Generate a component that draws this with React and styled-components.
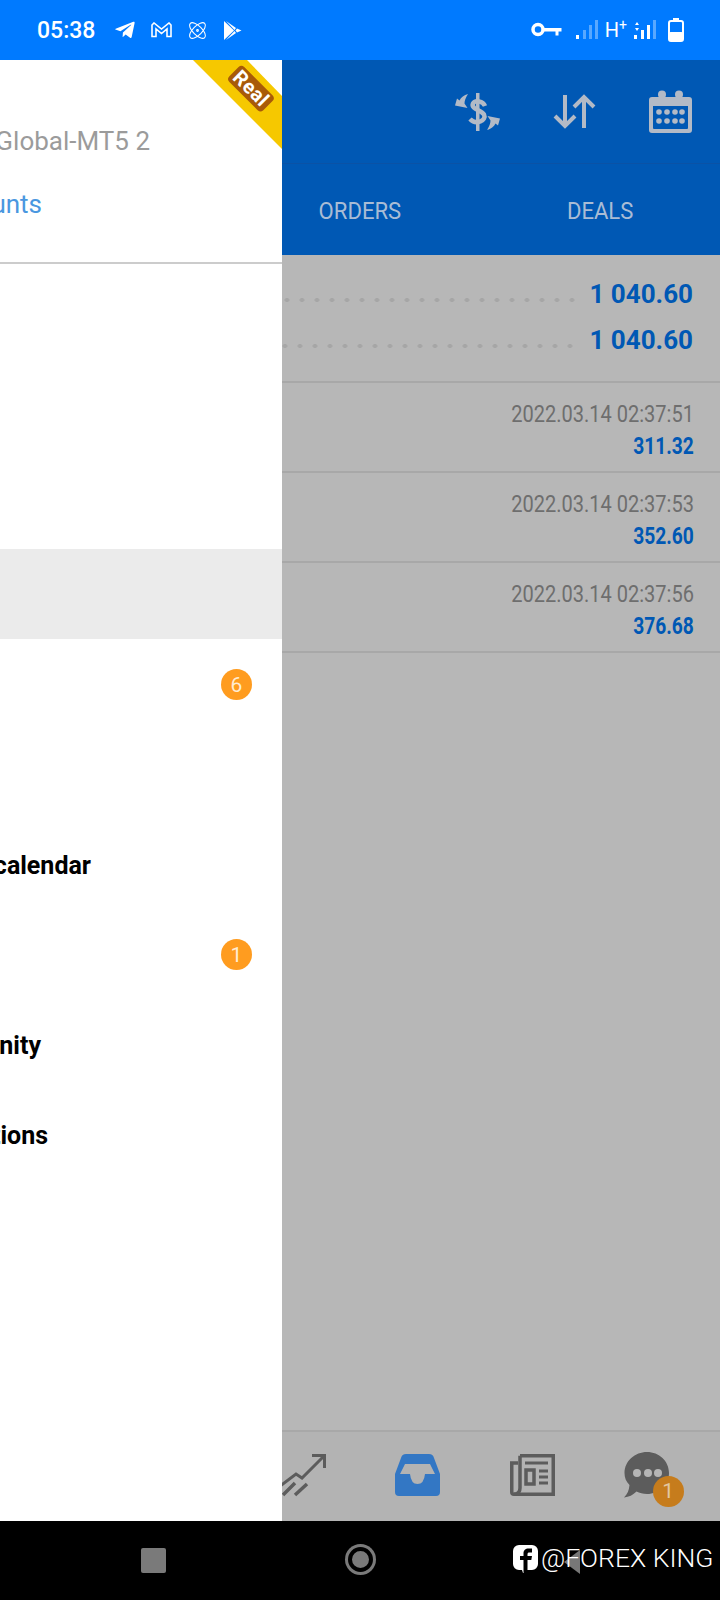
import React from "react";
import styled, { createGlobalStyle } from "styled-components";
import { FaTelegramPlane } from "react-icons/fa";
import { Atom } from "lucide-react";

const GlobalStyle = createGlobalStyle`
  html, body {
    margin: 0;
    padding: 0;
    background: #000;
    font-family: Roboto, "Liberation Sans", sans-serif;
  }
`;

const DEALS = [
  { time: "2022.03.14 02:37:51", value: "311.32" },
  { time: "2022.03.14 02:37:53", value: "352.60" },
  { time: "2022.03.14 02:37:56", value: "376.68" },
];

const MENU = [
  {},
  {},
  {},
  { active: true },
  { badge: 6 },
  {},
  { label: "Economic calendar", end: 191 },
  { badge: 1 },
  { label: "Traders Community", end: 241 },
  { label: "Notifications", end: 234 },
];

const KeyIcon = () => (
  <svg width="31" height="16" viewBox="0 0 31 16">
    <circle cx="7" cy="7.500" r="5" fill="none" stroke="#fff" strokeWidth="3.500" />
    <path d="M12 6h18.500v3.500h-3v4h-3v-4H12z" fill="#fff" />
  </svg>
);

const SignalIcon = ({ lit, arrows }) => (
  <svg width="23" height="20" viewBox="0 0 23 20">
    {arrows && <path d="M2 5l2-3 2 3zM2 8l2 3 2-3z" fill="#fff" />}
    {[
      [1, 15, 4],
      [8, 10, 9],
      [14, 5, 14],
      [20, 0, 19],
    ].map(([x, y, h], i) => (
      <rect
        key={x}
        x={x}
        y={y}
        width="3"
        height={h}
        fill={i < lit ? "#fff" : "#59a8ff"}
      />
    ))}
  </svg>
);

const BatteryIcon = () => (
  <svg width="16" height="24" viewBox="0 0 16 24">
    <path d="M5 0h6v2.500H5z" fill="#fff" />
    <rect x="1" y="3" width="14" height="20" rx="2" fill="none" stroke="#fff" strokeWidth="2" />
    <rect x="1" y="14" width="14" height="9" rx="1.500" fill="#fff" />
  </svg>
);

const MailIcon = () => (
  <svg width="21" height="16" viewBox="0 0 21 16">
    <path
      d="M1 14.500V3l2-2 7.500 6L18 1l2 2v11.500h-4V7l-5.500 4.500L5 7v7.500z"
      fill="none"
      stroke="#fff"
      strokeWidth="1.600"
    />
  </svg>
);

const PlayIcon = () => (
  <svg width="19" height="19" viewBox="0 0 19 19">
    <path d="M1 0l10 9.500L1 19zM3 0l10 7-1.500 2zM3 19l10-7-1.500-2zM14 7.500l4.500 2-4.500 2-1.500-2z" fill="#fff" />
  </svg>
);

const ExchangeIcon = () => (
  <svg width="45" height="38" viewBox="0 0 45 38" fill="#b3bac6">
    <rect x="21" y="0" width="3.500" height="38" />
    <path
      d="M30 13C28 8 20 6.500 18 10.500 15.500 16 26 17 29 21.500 32 27.500 21 32.500 15 26"
      fill="none"
      stroke="#b3bac6"
      strokeWidth="4.500"
    />
    <path d="M0 12.500L2 5.500 4.500 7.500C6 4.500 9 2 13 1 10.500 5 9.500 8 9.500 10.500L12.500 15Z" />
    <path d="M45 25.500L43 32.500 40.500 30.500C39 33.500 36 36 32 37 34.500 33 35.500 30 35.500 27.500L32.500 23Z" />
  </svg>
);

const SortIcon = () => (
  <svg width="43" height="35" viewBox="0 0 43 35" fill="none" stroke="#b3bac6" strokeWidth="4">
    <path d="M12 1V32M2 22L12 32 22 22" />
    <path d="M31 34V3M21 13L31 3 41 13" />
  </svg>
);

const CalendarIcon = () => (
  <svg width="43" height="43" viewBox="0 0 43 43" fill="#b3bac6">
    <circle cx="13" cy="4.500" r="4" />
    <circle cx="30" cy="4.500" r="4" />
    <path
      fillRule="evenodd"
      d="M3 7h37a3 3 0 013 3v30a3 3 0 01-3 3H3a3 3 0 01-3-3V10a3 3 0 013-3zM4 16v22a1 1 0 001 1h33a1 1 0 001-1V16z"
    />
    {[22, 31].map((cy) =>
      [10, 18, 26, 33].map((cx) => <circle key={cx + "-" + cy} cx={cx} cy={cy} r="2.800" />)
    )}
  </svg>
);

const ChartIcon = () => (
  <svg width="48" height="48" viewBox="0 0 48 48" fill="none" stroke="#5c5c5c" strokeWidth="3">
    <path d="M0 36L17 23l6 4L45 5M33 4.500h12.500V17" />
    <path d="M4 44l12-12M16 44l12-11" strokeWidth="3.500" />
  </svg>
);

const InboxIcon = () => (
  <svg width="45" height="42" viewBox="0 0 45 42">
    <path
      fillRule="evenodd"
      fill="#3377c4"
      d="M11 0H34Q38 0 39 4L45 20V38Q45 42 41 42H4Q0 42 0 38V20L6 4Q7 0 11 0ZM10 10H35L40 20H30Q29 30 22.500 30 16 30 15 20H5Z"
    />
  </svg>
);

const NewsIcon = () => (
  <svg width="45" height="42" viewBox="0 0 45 42" fill="none" stroke="#5c5c5c" strokeWidth="3.500">
    <path d="M10 1.750H43.250V40.250H4Q1.750 40.250 1.750 38V9H8" />
    <path d="M10 1.750V34Q10 40 4 40.250" />
    <path d="M15 9H38" strokeWidth="3" />
    <path d="M16 16H24V30H16Z" strokeWidth="3.500" />
    <path d="M29 17H38M29 23H38M29 29H38" strokeWidth="3" />
  </svg>
);

const ChatIcon = () => (
  <svg width="46" height="46" viewBox="0 0 46 46" fill="#5c5c5c">
    <path d="M23 0C35 0 45 9 45 21S35 42 23 42C19 42 15.500 41 12.500 39.500 9 43 5 45 0 45.500 3.500 42 5 38.500 5.500 33 2 29.500 0.500 25.500 0.500 21 0.500 9 11 0 23 0Z" />
    <circle cx="13" cy="21" r="4" fill="#b5b5b5" />
    <circle cx="24" cy="21" r="4" fill="#b5b5b5" />
    <circle cx="34" cy="21" r="4" fill="#b5b5b5" />
  </svg>
);

const FacebookIcon = () => (
  <svg width="25" height="28" viewBox="0 0 25 28">
    <path d="M6 0h13a6 6 0 016 6v13a6 6 0 01-6 6h-6l-3 3-1-3H6a6 6 0 01-6-6V6a6 6 0 016-6z" fill="#fff" />
    <path d="M10.500 27V15H7v-4h3.500V8.500C10.500 5 12.500 3.500 15.500 3.500H19v4h-2.500C15 7.500 14.500 8 14.500 9.500V11H19l-.7 4h-3.800v12z" fill="#000" />
  </svg>
);

export default function App() {
  return (
    <Screen>
      <GlobalStyle />
      <StatusBar>
        <StatusGroup>
          <Clock>05:38</Clock>
          <FaTelegramPlane size={22} color="#fff" />
          <MailIcon />
          <Atom size={21} color="#fff" strokeWidth={1.2} />
          <PlayIcon />
        </StatusGroup>
        <StatusGroup $right>
          <StatusSlot $after={5}>
            <KeyIcon />
          </StatusSlot>
          <StatusSlot>
            <SignalIcon lit={1} />
          </StatusSlot>
          <NetworkLabel>
            H<sup>+</sup>
          </NetworkLabel>
          <StatusSlot $after={4}>
            <SignalIcon lit={3} arrows />
          </StatusSlot>
          <StatusSlot>
            <BatteryIcon />
          </StatusSlot>
        </StatusGroup>
      </StatusBar>

      <Body>
        <Drawer>
          <Ribbon>
            <RibbonLabel>Real</RibbonLabel>
          </Ribbon>
          <DrawerHeader>
            <ServerName>MetaQuotes-Global-MT5 2</ServerName>
            <ManageLink>Manage accounts</ManageLink>
          </DrawerHeader>
          <Menu>
            {MENU.map((item, index) => (
              <MenuRow key={index} $active={item.active}>
                {item.label && <MenuLabel $end={item.end}>{item.label}</MenuLabel>}
                {item.badge && <CountBadge>{item.badge}</CountBadge>}
              </MenuRow>
            ))}
          </Menu>
        </Drawer>

        <Panel>
          <TopBar>
            <Toolbar>
              <ExchangeIcon />
              <SortIcon />
              <CalendarIcon />
            </Toolbar>
            <Tabs>
              <Tab>
                <Narrow>ORDERS</Narrow>
              </Tab>
              <Tab>
                <Narrow>DEALS</Narrow>
              </Tab>
            </Tabs>
          </TopBar>

          <Summary>
            <SummaryRow>
              <Leader />
              <SummaryValue>1 040.60</SummaryValue>
            </SummaryRow>
            <SummaryRow>
              <Leader $shift />
              <SummaryValue>1 040.60</SummaryValue>
            </SummaryRow>
          </Summary>

          {DEALS.map((deal) => (
            <DealRow key={deal.time}>
              <DealTime>{deal.time}</DealTime>
              <DealValue>{deal.value}</DealValue>
            </DealRow>
          ))}

          <Filler />

          <BottomTabs>
            <BottomTab>
              <ChartIcon />
            </BottomTab>
            <BottomTab>
              <InboxIcon />
            </BottomTab>
            <BottomTab>
              <NewsIcon />
            </BottomTab>
            <BottomTab>
              <ChatWrap>
                <ChatIcon />
                <ChatBadge>1</ChatBadge>
              </ChatWrap>
            </BottomTab>
          </BottomTabs>
        </Panel>
      </Body>

      <NavBar>
        <NavSlot>
          <NavSquare />
        </NavSlot>
        <NavSlot>
          <NavCircle />
        </NavSlot>
        <NavSlot>
          <NavBack />
        </NavSlot>
        <Watermark>
          <FacebookIcon />
          <WatermarkText>@FOREX KING</WatermarkText>
        </Watermark>
      </NavBar>
    </Screen>
  );
}

const Screen = styled.div`
  width: 720px;
  height: 1600px;
  display: flex;
  flex-direction: column;
  overflow: hidden;
`;

const StatusBar = styled.div`
  height: 60px;
  flex: none;
  display: flex;
  align-items: center;
  justify-content: space-between;
  padding: 0 37px;
  background: #007aff;
  color: #fff;
`;

const StatusGroup = styled.div`
  display: flex;
  align-items: center;
  gap: ${({ $right }) => ($right ? "8px" : "15px")};
  margin-right: ${({ $right }) => ($right ? "-1px" : "0")};
`;

const StatusSlot = styled.span`
  display: flex;
  margin-right: ${({ $after }) => $after || 0}px;
`;

const Clock = styled.span`
  font-size: 23px;
  font-weight: 500;
  margin-right: 4px;
`;

const NetworkLabel = styled.span`
  font-size: 20px;
  line-height: 24px;
  margin: 0 -2px 0 -1px;

  sup {
    font-size: 14px;
    line-height: 0;
    vertical-align: 7px;
  }
`;

const Body = styled.div`
  flex: 1;
  min-height: 0;
  display: grid;
  grid-template-columns: 282px 1fr;
`;

const Drawer = styled.aside`
  position: relative;
  display: flex;
  flex-direction: column;
  min-width: 0;
  overflow: hidden;
  background: #fff;
`;

const Ribbon = styled.div`
  position: absolute;
  top: 0;
  right: 0;
  width: 89px;
  height: 89px;
  background: #f6c800;
  clip-path: polygon(0 0, 54px 0, 89px 36px, 89px 89px);
`;

const RibbonLabel = styled.span`
  position: absolute;
  top: 18px;
  left: 34px;
  padding: 0 3px;
  border-radius: 4px;
  background: #a85a08;
  color: #fff;
  font-size: 20px;
  font-weight: 700;
  line-height: 21px;
  letter-spacing: 0.5px;
  transform: rotate(45deg);
`;

const DrawerHeader = styled.header`
  height: 204px;
  flex: none;
  display: flex;
  flex-direction: column;
  box-sizing: border-box;
  border-bottom: 2px solid #cccccc;
  padding-top: 66px;
  font-size: 26px;
  line-height: 30px;
  white-space: nowrap;
`;

const ServerName = styled.div`
  display: flex;
  justify-content: flex-end;
  padding-right: 132px;
  color: #9b9b9b;
`;

const ManageLink = styled.div`
  display: flex;
  justify-content: flex-end;
  margin-top: 33px;
  padding-right: 240px;
  color: #4a97e0;
`;

const Menu = styled.nav`
  padding-top: 15px;
`;

const MenuRow = styled.div`
  height: 90px;
  display: flex;
  align-items: center;
  justify-content: flex-end;
  background: ${({ $active }) => ($active ? "#ebebeb" : "transparent")};
  white-space: nowrap;
`;

const MenuLabel = styled.span`
  margin: 2px ${({ $end }) => $end}px 0 0;
  color: #000;
  font-size: 25px;
  font-weight: 700;
`;

const CountBadge = styled.span`
  width: 31px;
  height: 31px;
  margin-right: 30px;
  padding-top: 1px;
  box-sizing: border-box;
  display: flex;
  align-items: center;
  justify-content: center;
  border-radius: 50%;
  background: #ff9c1f;
  color: #ffecd2;
  font-size: 21px;
`;

const Panel = styled.main`
  min-width: 0;
  display: flex;
  flex-direction: column;
  overflow: hidden;
  background: #b7b7b7;
`;

const TopBar = styled.div`
  flex: none;
  background: #0058b4;
`;

const Toolbar = styled.div`
  height: 104px;
  box-sizing: border-box;
  border-bottom: 1px solid #0a52a6;
  padding-right: 28px;
  display: flex;
  align-items: center;
  justify-content: flex-end;
  gap: 53px;
`;

const Tabs = styled.div`
  height: 91px;
  margin-left: -42px;
  padding-top: 2px;
  box-sizing: border-box;
  display: grid;
  grid-template-columns: 240px 240px;
`;

const Tab = styled.div`
  display: flex;
  align-items: center;
  justify-content: center;
  color: #a9bcd5;
  font-size: 24px;
`;

const Narrow = styled.span`
  transform: scaleX(0.92);
`;

const Summary = styled.section`
  height: 128px;
  flex: none;
  box-sizing: border-box;
  padding-top: 16px;
  border-bottom: 2px solid #a8a8a8;
`;

const SummaryRow = styled.div`
  height: 46px;
  padding-right: 27px;
  display: flex;
  align-items: center;
  gap: 10px;
`;

const Leader = styled.div`
  flex: 1;
  height: 6px;
  margin-top: 11px;
  margin-right: ${({ $shift }) => ($shift ? "2px" : "0")};
  background: radial-gradient(circle, #a6a6a6 2px, transparent 2.500px) right center / 15px 6px repeat-x;
`;

const SummaryValue = styled.span`
  color: #0058b4;
  font-size: 26px;
  font-weight: 700;
  line-height: 30px;
  white-space: nowrap;
`;

const DealRow = styled.div`
  height: 90px;
  flex: none;
  box-sizing: border-box;
  padding: 17px 26px 0 0;
  border-bottom: 2px solid #a8a8a8;
  display: flex;
  flex-direction: column;
  align-items: flex-end;
`;

const DealTime = styled.span`
  color: #6e6e6e;
  font-size: 23px;
  line-height: 30px;
  transform: scaleX(0.87);
  transform-origin: right center;
  white-space: nowrap;
`;

const DealValue = styled.span`
  margin-top: 1px;
  color: #0058b4;
  font-size: 24px;
  font-weight: 700;
  line-height: 30px;
  transform: scaleX(0.8);
  transform-origin: right center;
`;

const Filler = styled.div`
  flex: 1;
`;

const BottomTabs = styled.div`
  height: 91px;
  flex: none;
  box-sizing: border-box;
  border-top: 2px solid #a8a8a8;
  background: #b3b3b3;
  display: grid;
  grid-template-columns: repeat(4, 114.500px);
  overflow: hidden;
`;

const BottomTab = styled.div`
  display: flex;
  align-items: center;
  justify-content: center;
  margin-left: -36px;
  margin-right: 36px;
  padding-bottom: 4px;
`;

const ChatWrap = styled.div`
  position: relative;
  display: flex;
`;

const ChatBadge = styled.span`
  position: absolute;
  right: -14px;
  bottom: -9px;
  width: 31px;
  height: 31px;
  display: flex;
  align-items: center;
  justify-content: center;
  border-radius: 50%;
  background: #c67c1c;
  color: #e3c7a0;
  font-size: 21px;
`;

const NavBar = styled.div`
  height: 79px;
  flex: none;
  position: relative;
  box-sizing: border-box;
  padding: 0 48px 0;
  background: #000;
  display: grid;
  grid-template-columns: repeat(3, 1fr);
`;

const NavSlot = styled.div`
  display: flex;
  align-items: center;
  justify-content: center;
`;

const NavSquare = styled.div`
  width: 25px;
  height: 25px;
  margin-left: 2px;
  border-radius: 2px;
  background: #7a7a7a;
`;

const NavCircle = styled.div`
  width: 17px;
  height: 17px;
  border-radius: 50%;
  background: #7a7a7a;
  border: 4px solid #000;
  box-shadow: 0 0 0 3px #7a7a7a;
  margin-top: -2px;
`;

const NavBack = styled.div`
  width: 0;
  height: 0;
  margin-left: 8px;
  margin-top: 2px;
  border-top: 12px solid transparent;
  border-bottom: 12px solid transparent;
  border-right: 16px solid #777;
`;

const Watermark = styled.div`
  position: absolute;
  top: 24px;
  left: 513px;
  display: flex;
  align-items: flex-start;
  gap: 3px;
`;

const WatermarkText = styled.span`
  color: #fff;
  font-size: 26.500px;
  font-weight: 300;
  line-height: 26px;
  white-space: nowrap;
`;
